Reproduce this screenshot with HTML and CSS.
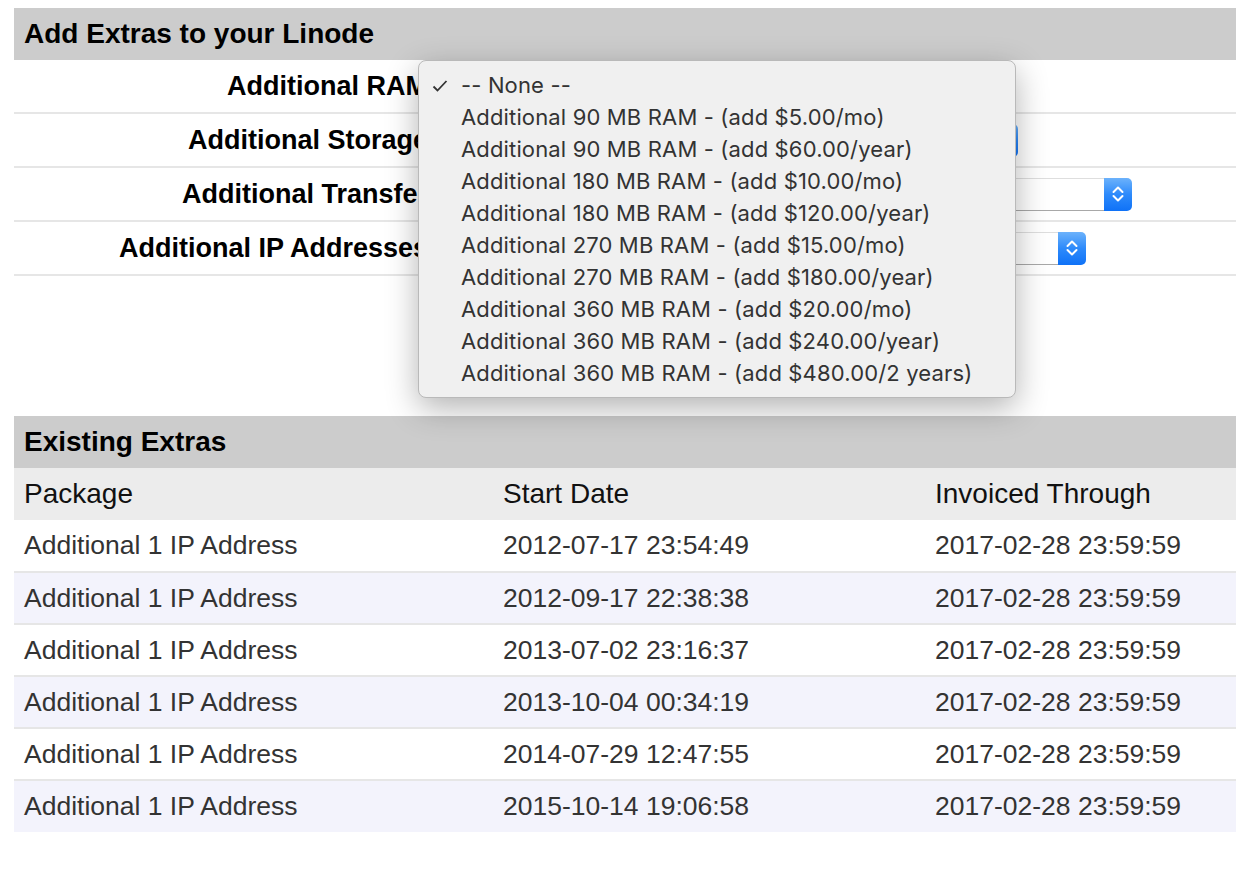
FILE: index.html
```html
<!DOCTYPE html>
<html lang="en">
<head>
  <meta charset="UTF-8" />
  <title>Linode Extras</title>
  <link rel="stylesheet" href="styles.css">
</head>
<body>

<div class="page">

  <section class="panel">
    <h2 class="panel-title">Add Extras to your Linode</h2>

    <div class="form-row">
      <label for="ram">Additional RAM</label>
      <div class="select w-ram">
        <select id="ram"><option>-- None --</option></select>
        <span class="select-btn"><svg width="12" height="18" viewBox="0 0 12 18"><polyline points="1.5,7 6,2.5 10.5,7" /><polyline points="1.5,11 6,15.5 10.5,11" /></svg></span>
      </div>
    </div>

    <div class="form-row">
      <label for="storage">Additional Storage</label>
      <div class="select w-storage">
        <select id="storage"><option>-- None --</option></select>
        <span class="select-btn"><svg width="12" height="18" viewBox="0 0 12 18"><polyline points="1.5,7 6,2.5 10.5,7" /><polyline points="1.5,11 6,15.5 10.5,11" /></svg></span>
      </div>
    </div>

    <div class="form-row">
      <label for="transfer">Additional Transfer</label>
      <div class="select w-transfer">
        <select id="transfer"><option>-- None --</option></select>
        <span class="select-btn"><svg width="12" height="18" viewBox="0 0 12 18"><polyline points="1.5,7 6,2.5 10.5,7" /><polyline points="1.5,11 6,15.5 10.5,11" /></svg></span>
      </div>
    </div>

    <div class="form-row">
      <label for="ips">Additional IP Addresses</label>
      <div class="select w-ips">
        <select id="ips"><option>-- None --</option></select>
        <span class="select-btn"><svg width="12" height="18" viewBox="0 0 12 18"><polyline points="1.5,7 6,2.5 10.5,7" /><polyline points="1.5,11 6,15.5 10.5,11" /></svg></span>
      </div>
    </div>
  </section>

  <!-- open dropdown for Additional RAM -->
  <ul class="menu">
    <li class="checked"><svg class="check" width="16" height="14" viewBox="0 0 16 14"><polyline points="1.5,7.5 5.5,11.5 14.5,2" /></svg>-- None --</li>
    <li>Additional 90 MB RAM - (add $5.00/mo)</li>
    <li>Additional 90 MB RAM - (add $60.00/year)</li>
    <li>Additional 180 MB RAM - (add $10.00/mo)</li>
    <li>Additional 180 MB RAM - (add $120.00/year)</li>
    <li>Additional 270 MB RAM - (add $15.00/mo)</li>
    <li>Additional 270 MB RAM - (add $180.00/year)</li>
    <li>Additional 360 MB RAM - (add $20.00/mo)</li>
    <li>Additional 360 MB RAM - (add $240.00/year)</li>
    <li>Additional 360 MB RAM - (add $480.00/2 years)</li>
  </ul>

  <section class="panel extras">
    <h2 class="panel-title">Existing Extras</h2>
    <table>
      <thead>
        <tr><th class="col-pkg">Package</th><th class="col-start">Start Date</th><th>Invoiced Through</th></tr>
      </thead>
      <tbody>
        <tr><td>Additional 1 IP Address</td><td>2012-07-17 23:54:49</td><td>2017-02-28 23:59:59</td></tr>
        <tr><td>Additional 1 IP Address</td><td>2012-09-17 22:38:38</td><td>2017-02-28 23:59:59</td></tr>
        <tr><td>Additional 1 IP Address</td><td>2013-07-02 23:16:37</td><td>2017-02-28 23:59:59</td></tr>
        <tr><td>Additional 1 IP Address</td><td>2013-10-04 00:34:19</td><td>2017-02-28 23:59:59</td></tr>
        <tr><td>Additional 1 IP Address</td><td>2014-07-29 12:47:55</td><td>2017-02-28 23:59:59</td></tr>
        <tr><td>Additional 1 IP Address</td><td>2015-10-14 19:06:58</td><td>2017-02-28 23:59:59</td></tr>
      </tbody>
    </table>
  </section>

</div>

</body>
</html>
```

FILE: styles.css
```css
* { box-sizing: border-box; }
body {
  margin: 0;
  background: white;
  font-family: "Liberation Sans", Arial, sans-serif;
  color: #222;
  overflow: hidden;
}
.page {
  position: relative;
  padding: 8px 0 0 14px;
}
.panel-title {
  margin: 0;
  background: #cccccc;
  height: 52px;
  padding: 0 10px;
  font-size: 28px;
  font-weight: bold;
  line-height: 52px;
  color: #000;
}
.form-row {
  display: flex;
  align-items: center;
  gap: 4px;
  height: 54px;
  border-bottom: 2px solid #e6e6e6;
}
.form-row label {
  width: 414px;
  text-align: right;
  font-size: 27px;
  font-weight: bold;
  color: #000;
}
.select {
  display: flex;
  height: 33px;
}
.select select {
  appearance: none;
  -webkit-appearance: none;
  flex: 1;
  border: 1px solid #cfcfcf;
  border-top-color: #dedede;
  border-bottom-color: #a8a8a8;
  border-right: none;
  border-radius: 5px 0 0 5px;
  background: white;
  font-family: Inter, sans-serif;
  font-size: 20px;
  color: #333;
  padding: 0 10px;
}
.select-btn {
  width: 28px;
  display: flex;
  align-items: center;
  justify-content: center;
  border-radius: 0 5px 5px 0;
  background: linear-gradient(#6cb2fb, #2d8afb 50%, #0f72f7);
}
.select-btn polyline {
  fill: none;
  stroke: white;
  stroke-width: 2;
  stroke-linecap: round;
  stroke-linejoin: round;
}
.w-ram { width: 560px; }
.w-storage { width: 586px; }
.w-transfer { width: 700px; }
.w-ips { width: 654px; }

.menu {
  position: absolute;
  left: 418px;
  top: 60px;
  width: 598px;
  margin: 0;
  padding: 8px 0;
  list-style: none;
  background: #f0f0f0;
  border: 1px solid #b9b9b9;
  border-radius: 8px;
  box-shadow: 0 10px 32px rgba(0, 0, 0, 0.3);
  font-family: Inter, "Noto Sans", sans-serif;
  font-size: 22px;
  letter-spacing: 0.15px;
  color: #333;
}
.menu li {
  height: 32px;
  line-height: 32px;
  padding-left: 42px;
  position: relative;
  white-space: nowrap;
}
.menu .check {
  position: absolute;
  left: 13px;
  top: 10px;
}
.check polyline {
  fill: none;
  stroke: #333;
  stroke-width: 1.8;
}

.extras {
  margin-top: 140px;
}
table {
  width: 100%;
  border-collapse: collapse;
  font-size: 26.5px;
}
th {
  background: #ececec;
  height: 52px;
  padding: 0 10px;
  text-align: left;
  font-size: 28px;
  font-weight: normal;
  color: #111;
}
.col-pkg { width: 479px; }
.col-start { width: 432px; }
td {
  height: 52px;
  padding: 0 10px;
  color: #333;
  border-top: 2px solid #e6e6e6;
}
tbody tr:first-child td { border-top: none; }
tbody tr:nth-child(even) td { background: #f3f3fc; }
```
